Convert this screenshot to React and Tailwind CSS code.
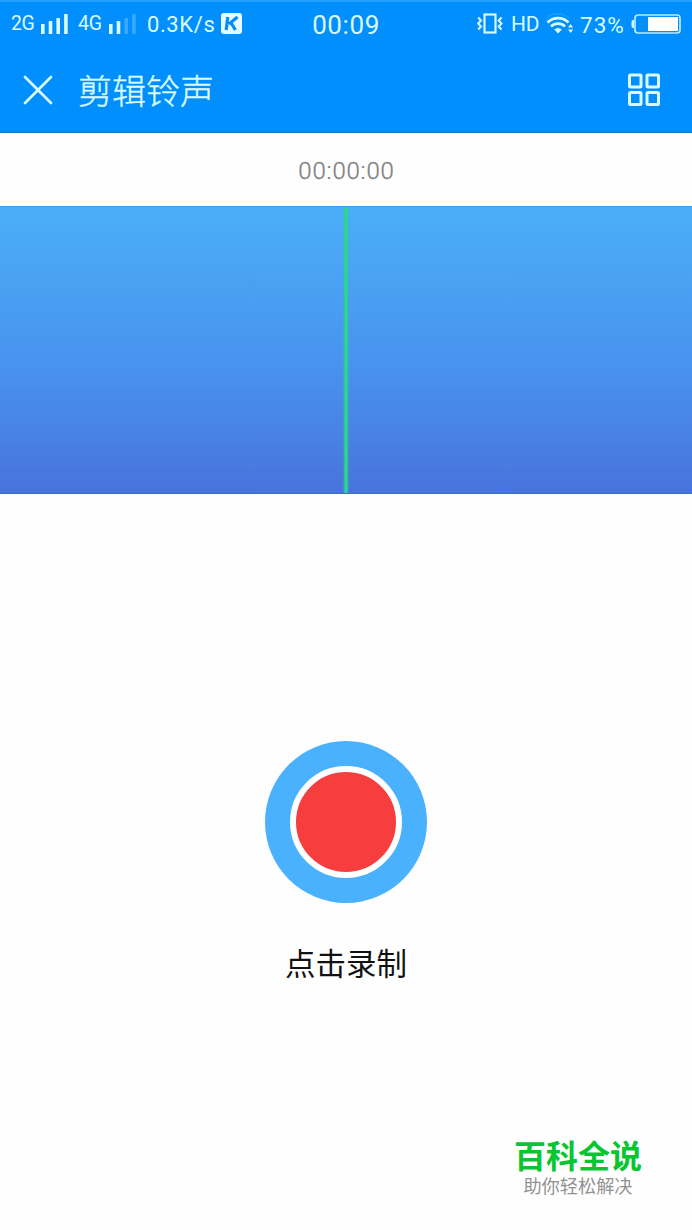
const SignalBars = ({ active }) => (
  <svg width="27" height="20" viewBox="0 0 27 20" fill="#d9fbff">
    {[10, 13, 16, 20].map((h, i) => (
      <rect
        key={i}
        x={i * 7.7}
        y={20 - h}
        width="3.6"
        height={h}
        rx="0.6"
        opacity={i < active ? 1 : 0.25}
      />
    ))}
  </svg>
);

const VibrateIcon = () => (
  <svg width="26" height="21" viewBox="0 0 26 21" fill="none" stroke="#d9fbff" strokeWidth="2.2">
    <rect x="7.5" y="1.5" width="11" height="18" />
    <path d="M1.2 4.5l2.8 3-2.8 3 2.8 3-2.8 3M24.5 4.5l-2.8 3 2.8 3-2.8 3 2.8 3" strokeWidth="2" />
  </svg>
);

const WifiIcon = () => (
  <svg className="shrink-0" width="28" height="22" viewBox="0 0 28 22" fill="none" stroke="#d9fbff">
    <path d="M0.5 5.5a16.5 16.5 0 0 1 23 0" strokeWidth="1.5" opacity="0.12" />
    <path d="M1.5 9.5a15 15 0 0 1 21 0" strokeWidth="2.7" />
    <path d="M5 13.5a10 10 0 0 1 14 0" strokeWidth="2.7" />
    <path d="M8.2 16.5a6 6 0 0 1 7.6 0L12 20.5z" fill="#d9fbff" stroke="none" />
    <path d="M22 14.5l2.6-3.5 2.6 3.5zM22 16.5l2.6 3.5 2.6-3.5z" fill="#d9fbff" stroke="none" />
  </svg>
);

const BatteryIcon = () => (
  <svg width="50" height="20" viewBox="0 0 50 20" fill="none">
    <path d="M3 6H2Q.5 6 .5 8v4q0 2 1.5 2h1z" fill="#d9fbff" />
    <rect x="4" y="1" width="45" height="18" rx="3" stroke="#b8ecff" strokeWidth="1.7" />
    <rect x="17" y="3" width="30" height="14" fill="#fff" />
  </svg>
);

const StatusBar = () => (
  <div className="grid h-[47px] grid-cols-[302px_88px_302px] items-center border-t-2 border-[#22a0fb] pb-[2px] leading-none whitespace-nowrap text-[#d9fbff]">
    <div className="flex items-center pl-[11px]">
      <span className="w-[30px] text-[19.5px] tracking-[-0.4px]">2G</span>
      <SignalBars active={4} />
      <span className="ml-[10px] w-[31px] text-[19.5px] tracking-[-0.2px]">4G</span>
      <SignalBars active={2} />
      <span className="ml-[11px] w-[74px] pt-[3px] text-[22px] tracking-[0.6px]">0.3K/s</span>
      <svg width="21" height="21" viewBox="0 0 21 21">
        <rect width="21" height="21" rx="3" fill="#e4fcff" />
        <path d="M6.8 4L5.2 17M16.5 4L8 11M9.5 9L14.5 17" fill="none" stroke="#078cf5" strokeWidth="3.2" />
      </svg>
    </div>
    <div className="pt-[3px] text-center text-[26px] tracking-[0.6px]">00:09</div>
    <div className="flex items-center pl-[87px]">
      <VibrateIcon />
      <span className="ml-[8px] w-[35px] pt-[2px] text-[21px] tracking-[-0.3px]">HD</span>
      <WifiIcon />
      <span className="ml-[6px] w-[51px] pt-[3px] text-[22.5px] tracking-[1px]">73%</span>
      <BatteryIcon />
    </div>
  </div>
);

const Header = () => (
  <header className="flex h-[86px] items-center border-b border-[#0878d4] pr-[31px] pl-[23px] text-[#d9fbff]">
    <svg className="mr-[25px]" width="30" height="30" viewBox="0 0 30 30" stroke="currentColor" strokeWidth="2.7" strokeLinecap="round">
      <path d="M2 2l26 26M28 2L2 28" />
    </svg>
    <h1 className="flex-1 pt-1 text-[34px] leading-none font-light [-webkit-text-stroke:0.4px]">剪辑铃声</h1>
    <svg width="34" height="34" viewBox="0 0 34 34" fill="none" stroke="currentColor" strokeWidth="3">
      <rect x="2.5" y="2" width="11.5" height="12" rx="1" />
      <rect x="20" y="2" width="11.5" height="12" rx="1" />
      <rect x="2.5" y="19.5" width="11.5" height="12" rx="1" />
      <rect x="20" y="19.5" width="11.5" height="12" rx="1" />
    </svg>
  </header>
);

export default function App() {
  return (
    <div className="flex h-[1230px] w-[692px] flex-col overflow-hidden bg-[#fefefe] font-[Roboto,'Noto_Sans_CJK_SC',sans-serif]">
      <div className="bg-[#028ffe]">
        <StatusBar />
        <Header />
      </div>

      {/* Elapsed time */}
      <div className="flex h-[73px] items-center justify-center pt-[3px] pl-px text-[24px] font-light tracking-[0.8px] text-[#808080] [-webkit-text-stroke:0.3px]">
        00:00:00
      </div>

      {/* Waveform area with playhead */}
      <div className="flex h-[288px] justify-center overflow-hidden border-y border-t-[#3c9fe8] border-b-[#4569c8] bg-linear-to-b from-[#4baef8] via-[#4893ee] via-55% to-[#4873dc]">
        <div className="w-[2px] bg-[#22e07c] shadow-[0_0_2px_1px_#35c9a4]" />
      </div>

      {/* Record */}
      <main className="flex flex-1 flex-col items-center pt-[247px]">
        <button className="flex size-[162px] items-center justify-center rounded-full bg-[#49b1fd]">
          <span className="size-[112px] rounded-full border-[6px] border-white bg-[#f63e3e]" />
        </button>
        <p className="mt-[40px] text-[30.5px] leading-[44px] text-[#111]">点击录制</p>
      </main>

      {/* Watermark */}
      <footer className="flex h-[98px] flex-col items-center self-end pr-[50px] whitespace-nowrap">
        <span className="pt-px text-[32px] leading-[48px] font-bold text-[#08c532]">百科全说</span>
        <span className="text-[18.2px] leading-[12px] text-[#929292]">助你轻松解决</span>
      </footer>
    </div>
  );
}
